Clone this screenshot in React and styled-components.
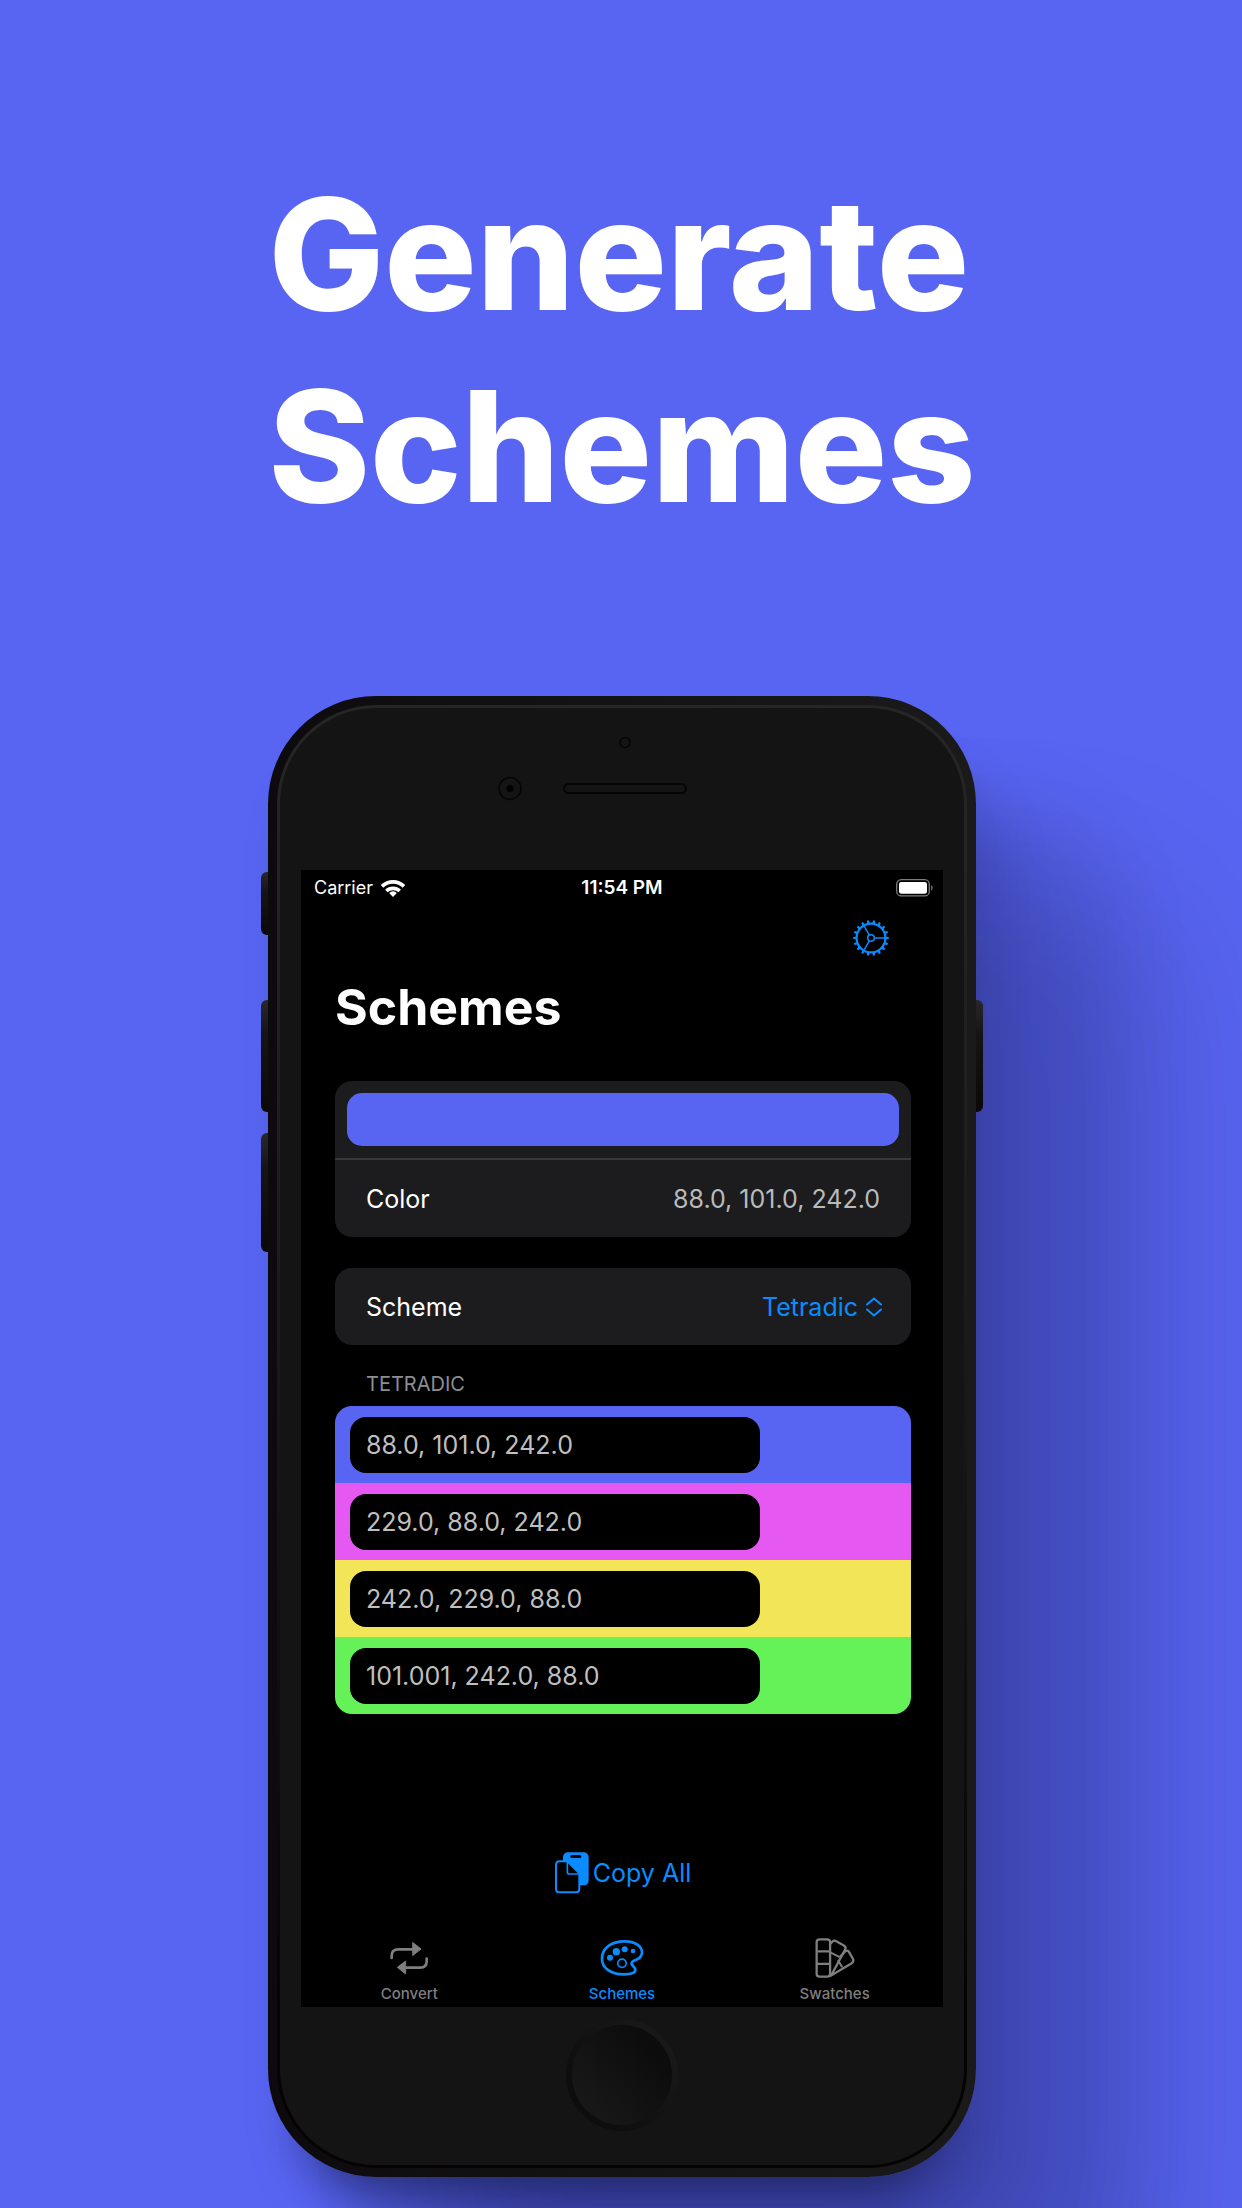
import React, { useState } from "react";
import styled, { createGlobalStyle } from "styled-components";

const GlobalStyle = createGlobalStyle`
  *, *::before, *::after { box-sizing: border-box; }
  body {
    margin: 0;
    background: #5865f2;
    font-family: Inter, "Liberation Sans", sans-serif;
    -webkit-font-smoothing: antialiased;
  }
  h1, h2, ul { margin: 0; padding: 0; }
  button, input, select { font: inherit; color: inherit; }
`;

const Page = styled.div`
  min-height: 100vh;
  display: flex;
  flex-direction: column;
  align-items: center;
  padding: 158px 0 31px 2px;
  overflow: hidden;
  background: #5865f2;
`;

const Headline = styled.h1`
  display: flex;
  flex-direction: column;
  align-items: flex-start;
  margin-bottom: 154px;
  color: #fff;
  font-size: 154px;
  font-weight: 800;
  line-height: 192px;
`;

const Phone = styled.div`
  position: relative;
  width: 100%;
  max-width: 708px;
  padding: 9px;
  border-radius: 108px;
  background: linear-gradient(90deg, #0d0a0d, #121213 40%, #1a1a1a);
  box-shadow:
    0 50px 50px -36px rgba(6, 8, 30, 0.5),
    40px 60px 50px -10px rgba(6, 8, 30, 0.1),
    130px 120px 90px rgba(6, 8, 30, 0.12),
    200px 190px 160px rgba(6, 8, 30, 0.16);
`;

const SideButton = styled.span`
  position: absolute;
  top: ${(p) => p.$top}px;
  ${(p) => p.$side}: -7px;
  width: 7px;
  height: ${(p) => p.$height}px;
  border-radius: ${(p) => (p.$side === "left" ? "6px 0 0 6px" : "0 6px 6px 0")};
  background: linear-gradient(#28282a, #171416 30%, #0b080a);
`;

const Face = styled.div`
  display: flex;
  flex-direction: column;
  padding: 0 21px;
  border: 3px solid transparent;
  border-radius: 99px;
  background:
    linear-gradient(#141414, #141414) padding-box,
    linear-gradient(#262627, #1c1c1d 40%, #060304 90%) border-box;
`;

const Earpiece = styled.div`
  height: 162px;
  display: flex;
  justify-content: center;
  svg { display: block; }
`;

const Chin = styled.div`
  height: 158px;
  display: flex;
  justify-content: center;
  align-items: flex-start;
  padding-top: 12px;
`;

const HomeButton = styled.button`
  width: 112px;
  height: 112px;
  padding: 0;
  border: 6px solid transparent;
  border-radius: 50%;
  background:
    linear-gradient(50deg, #171717 20%, #0c0c0c 80%) padding-box,
    linear-gradient(50deg, #0d0d0d 20%, #181818 80%) border-box;
`;

const Screen = styled.div`
  display: flex;
  flex-direction: column;
  min-height: 1137px;
  background: #000;
  color: #fff;
`;

const StatusBar = styled.div`
  display: grid;
  grid-template-columns: 1fr auto 1fr;
  align-items: center;
  height: 34px;
  padding: 2px 9px 0;
  font-size: 18px;
  line-height: 24px;
  svg { display: block; }
`;

const Carrier = styled.span`
  display: flex;
  align-items: center;
  gap: 8px;
  padding-left: 4px;
`;

const Clock = styled.span`
  font-size: 19px;
  font-weight: 600;
`;

const Battery = styled.span`
  justify-self: end;
`;

const Toolbar = styled.div`
  display: flex;
  justify-content: flex-end;
  align-items: center;
  height: 68px;
  padding-right: 54px;
`;

const IconButton = styled.button`
  display: flex;
  padding: 0;
  border: 0;
  background: none;
  color: #0a8cff;
`;

const Content = styled.main`
  flex: 1;
  display: flex;
  flex-direction: column;
  padding: 4px 32px 29px 34px;
`;

const Title = styled.h2`
  margin-bottom: 43px;
  font-size: 50px;
  font-weight: 700;
  line-height: 62px;
`;

const Card = styled.section`
  margin-bottom: ${(p) => p.$gap}px;
  border-radius: 17px;
  background: #1c1c1e;
  overflow: hidden;
`;

const SwatchCell = styled.div`
  padding: 12px;
  border-bottom: 2px solid #38383b;
`;

const Swatch = styled.div`
  height: 53px;
  border-radius: 15px;
  background: #5865f2;
`;

const Row = styled.div`
  display: flex;
  align-items: center;
  justify-content: space-between;
  height: 77px;
  padding: 0 ${(p) => (p.$picker ? 28 : 31)}px 0 31px;
  font-size: 25px;
  line-height: 32px;
`;

const ValueInput = styled.input`
  flex: 1;
  min-width: 0;
  padding: 0;
  border: 0;
  outline: 0;
  background: none;
  color: #bababb;
  text-align: right;
`;

const Picker = styled.span`
  display: flex;
  align-items: center;
  gap: 6px;
  color: #0a8cff;
`;

const Select = styled.select`
  appearance: none;
  padding: 0;
  border: 0;
  outline: 0;
  background: none;
`;

const SectionLabel = styled.h2`
  margin-bottom: 9px;
  padding-left: 31px;
  color: #8d8d93;
  font-size: 20px;
  font-weight: 400;
  line-height: 26px;
`;

const Palette = styled.ul`
  list-style: none;
  border-radius: 17px;
  overflow: hidden;
`;

const PaletteRow = styled.li`
  display: flex;
  align-items: center;
  height: 77px;
  padding-left: 15px;
  background: ${(p) => p.$color};
`;

const PaletteInput = styled.input`
  width: 73%;
  height: 56px;
  padding: 0 16px;
  border: 0;
  border-radius: 16px;
  outline: 0;
  background: #000;
  color: #bfbfbf;
  font-size: 25px;
`;

const CopyButton = styled.button`
  display: flex;
  align-items: center;
  align-self: center;
  gap: 4px;
  margin-top: auto;
  padding: 0;
  border: 0;
  background: none;
  color: #0a8cff;
  font-size: 25px;
  line-height: 32px;
`;

const TabBar = styled.nav`
  display: grid;
  grid-template-columns: repeat(3, 1fr);
  height: 84px;
  padding: 0 2px;
`;

const Tab = styled.a`
  display: flex;
  flex-direction: column;
  align-items: center;
  gap: 6px;
  padding-top: 15px;
  color: ${(p) => (p.$active ? "#0a8cff" : "#7f7f7f")};
  font-size: 15px;
  font-weight: 500;
  line-height: 20px;
  text-decoration: none;
`;

function SensorArt() {
  return (
    <svg width="264" height="162" viewBox="-12 0 264 162" fill="none" stroke="#050505" strokeWidth="1.5" aria-hidden="true">
      <circle cx="123" cy="34.500" r="5" />
      <circle cx="8" cy="80.500" r="11" />
      <circle cx="8" cy="80.500" r="3" fill="#000" />
      <rect x="62" y="76" width="122" height="9" rx="4.500" strokeWidth="2" />
    </svg>
  );
}

function WifiIcon() {
  return (
    <svg width="24" height="18" viewBox="391 594 72 54" fill="none" stroke="currentColor" strokeWidth="11" aria-hidden="true">
      <path d="M394 616a47 47 0 0 1 66 0" />
      <path d="M407 630a29 29 0 0 1 40 0" />
      <path d="M427 648L415.500 636a16 16 0 0 1 23 0z" fill="currentColor" stroke="none" />
    </svg>
  );
}

function BatteryIcon() {
  return (
    <svg width="38" height="18" viewBox="0 0 38 18" fill="none" aria-hidden="true">
      <rect x="0.700" y="0.700" width="32.600" height="16.200" rx="4.500" stroke="#7c7c7c" strokeWidth="1.300" />
      <rect x="3" y="3" width="28" height="11.700" rx="2.300" fill="#fff" />
      <path d="M35.200 6.200c1.900.4 1.900 4.800 0 5.200z" fill="#7c7c7c" />
    </svg>
  );
}

function GearIcon() {
  const teeth = Array.from({ length: 18 }, (_, i) => i * 20);
  const spokes = [0, 120, 240];
  return (
    <svg width="36" height="36" viewBox="-18.500 -18.500 37 37" fill="none" stroke="currentColor" aria-hidden="true">
      <circle r="14.800" strokeWidth="2.200" />
      <circle r="3.400" strokeWidth="1.600" />
      {spokes.map((a) => (
        <path key={a} d="M3.800 0H15" strokeWidth="1.500" transform={`rotate(${a})`} />
      ))}
      {teeth.map((a) => (
        <path key={a} d="M15.500-1.400L18.300-1V1L15.500 1.400z" fill="currentColor" stroke="none" transform={`rotate(${a})`} />
      ))}
    </svg>
  );
}

function ChevronsIcon() {
  return (
    <svg width="18" height="20" viewBox="0 0 18 20" fill="none" stroke="currentColor" strokeWidth="2" strokeLinecap="round" strokeLinejoin="round" aria-hidden="true">
      <path d="M2 7.500L9 1.500L16 7.500" />
      <path d="M2 12.500L9 18.500L16 12.500" />
    </svg>
  );
}

function CopyIcon() {
  return (
    <svg width="34" height="42" viewBox="0 0 102 126" fill="none" aria-hidden="true">
      <rect x="24" y="1" width="77" height="99" rx="14" fill="currentColor" />
      <rect x="46" y="9" width="33" height="9" rx="4" fill="#000" />
      <path d="M14 28H37L73 64V110Q73 121 62 121H14Q3 121 3 110V39Q3 28 14 28Z" fill="#000" stroke="currentColor" strokeWidth="6" />
      <path d="M37 28V59Q37 66 44 66H73" stroke="currentColor" strokeWidth="5" />
    </svg>
  );
}

function ConvertIcon() {
  return (
    <svg width="40" height="40" viewBox="150 114 120 120" fill="none" stroke="currentColor" strokeWidth="8" strokeLinecap="round" aria-hidden="true">
      <path d="M158 174V167C158 154 166 148 178 148H222" />
      <path d="M263 176V184C263 196 256 203 244 203H198" />
      <path d="M222 128L246 147L222 166z" fill="currentColor" strokeWidth="3" strokeLinejoin="round" />
      <path d="M199 184L175 202L199 221z" fill="currentColor" strokeWidth="3" strokeLinejoin="round" />
    </svg>
  );
}

function PaletteIcon() {
  return (
    <svg width="44" height="40" viewBox="302 354 132 120" fill="none" stroke="currentColor" strokeWidth="8" aria-hidden="true">
      <path d="M308 416C308 385 335 364 376 364C408 364 428 379 428 397C428 410 420 416 409 420C399 424 395 427 397 432C399 438 408 442 408 450C408 459 395 463 373 463C333 463 308 443 308 416Z" />
      <circle cx="368" cy="430" r="12.500" strokeWidth="5" />
      <g fill="currentColor" stroke="none">
        <circle cx="332" cy="413" r="9" />
        <circle cx="351" cy="395" r="11" />
        <circle cx="376" cy="388" r="9" />
        <circle cx="401" cy="393" r="7" />
      </g>
    </svg>
  );
}

function SwatchesIcon() {
  return (
    <svg width="40" height="40" viewBox="167 115 120 122" fill="none" stroke="currentColor" strokeWidth="7" strokeLinejoin="round" aria-hidden="true">
      <rect x="171" y="119" width="41" height="114" rx="9" />
      <path d="M171 156H212M171 194H212" />
      <path d="M213 132L219 126Q225 121 231 125L254 138Q262 143 258 150L216 228" />
      <path d="M213 159L241 173" strokeWidth="6" />
      <path d="M241 174L257 157Q265 149 270 158L282 179Q285 187 278 192L211 232" />
      <path d="M236 182L249 204" strokeWidth="6" />
    </svg>
  );
}

const COLORS = [
  { css: "#5865f2", value: "88.0, 101.0, 242.0" },
  { css: "#e558f2", value: "229.0, 88.0, 242.0" },
  { css: "#f2e558", value: "242.0, 229.0, 88.0" },
  { css: "#65f258", value: "101.001, 242.0, 88.0" },
];

const TABS = [
  { label: "Convert", Icon: ConvertIcon },
  { label: "Schemes", Icon: PaletteIcon },
  { label: "Swatches", Icon: SwatchesIcon },
];

export default function App() {
  const [tab, setTab] = useState("Schemes");
  return (
    <>
      <GlobalStyle />
      <Page>
        <Headline>
          <span>Generate</span>
          <span>Schemes</span>
        </Headline>
        <Phone>
          <SideButton $side="left" $top={176} $height={63} />
          <SideButton $side="left" $top={304} $height={112} />
          <SideButton $side="left" $top={437} $height={119} />
          <SideButton $side="right" $top={304} $height={112} />
          <Face>
            <Earpiece>
              <SensorArt />
            </Earpiece>
            <Screen>
              <StatusBar>
                <Carrier>
                  Carrier
                  <WifiIcon />
                </Carrier>
                <Clock>11:54 PM</Clock>
                <Battery>
                  <BatteryIcon />
                </Battery>
              </StatusBar>
              <Toolbar>
                <IconButton type="button" aria-label="Settings">
                  <GearIcon />
                </IconButton>
              </Toolbar>
              <Content>
                <Title>Schemes</Title>
                <Card $gap={31}>
                  <SwatchCell>
                    <Swatch />
                  </SwatchCell>
                  <Row>
                    <label htmlFor="color">Color</label>
                    <ValueInput id="color" defaultValue={COLORS[0].value} />
                  </Row>
                </Card>
                <Card $gap={26}>
                  <Row $picker>
                    <label htmlFor="scheme">Scheme</label>
                    <Picker>
                      <Select id="scheme" defaultValue="Tetradic">
                        <option>Tetradic</option>
                      </Select>
                      <ChevronsIcon />
                    </Picker>
                  </Row>
                </Card>
                <SectionLabel>TETRADIC</SectionLabel>
                <Palette>
                  {COLORS.map((c, i) => (
                    <PaletteRow key={c.css} $color={c.css}>
                      <PaletteInput readOnly value={c.value} aria-label={`Scheme color ${i + 1}`} />
                    </PaletteRow>
                  ))}
                </Palette>
                <CopyButton type="button">
                  <CopyIcon />
                  Copy All
                </CopyButton>
              </Content>
              <TabBar>
                {TABS.map(({ label, Icon }) => (
                  <Tab key={label} href={`#${label.toLowerCase()}`} $active={tab === label} onClick={() => setTab(label)}>
                    <Icon />
                    {label}
                  </Tab>
                ))}
              </TabBar>
            </Screen>
            <Chin>
              <HomeButton type="button" aria-label="Home" />
            </Chin>
          </Face>
        </Phone>
      </Page>
    </>
  );
}
